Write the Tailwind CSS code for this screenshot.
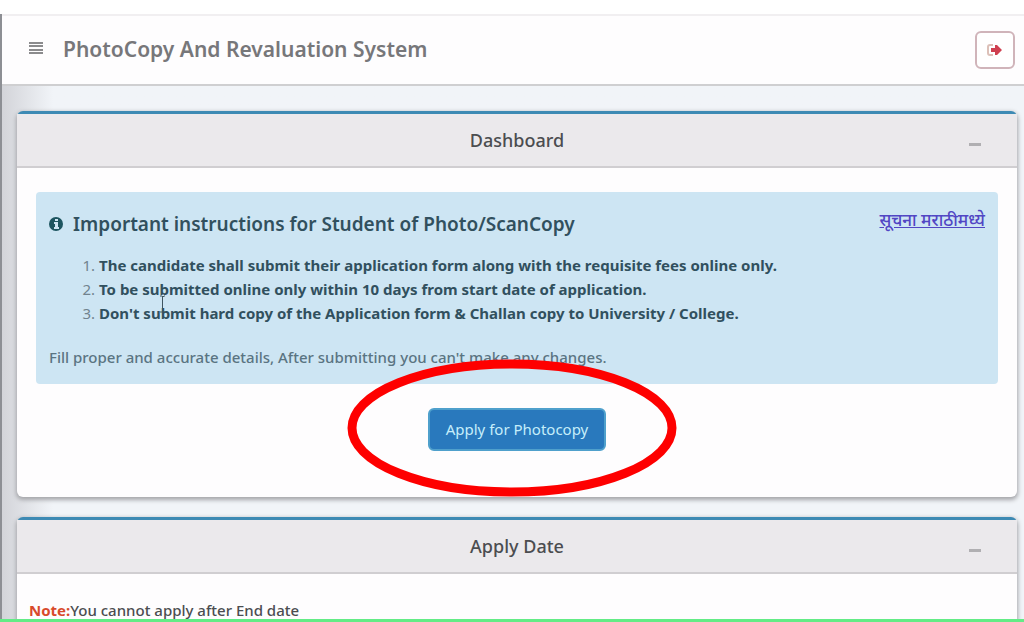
<!DOCTYPE html>
<html lang="en">
<head>
    <meta charset="UTF-8">
    <meta name="viewport" content="width=device-width, initial-scale=1.0">
    <title>PhotoCopy And Revaluation System</title>
    <script src="https://cdn.jsdelivr.net/npm/@tailwindcss/browser@4"></script>
</head>
<body class="h-screen overflow-hidden flex flex-col bg-white font-['Noto_Sans','Open_Sans',sans-serif] text-[#4b4d50]">
    <div class="flex-1 min-h-0 overflow-hidden mt-[14px] border-l-2 border-[#8d8f94] bg-[#f1f4f8]">
        <header class="flex items-center h-[72px] pl-[27px] pr-[9px] bg-[#fefdfe] border-t-2 border-t-[#f1eff1] border-b-2 border-b-[#cfcfd1]">
            <button type="button" aria-label="Toggle menu" class="mr-5">
                <svg class="w-[14px] h-[14px] mb-1" viewBox="0 0 14 14" fill="none" stroke="#8b8b8d" stroke-width="2">
                    <path d="M0 2h14M0 5h14M0 9h14M0 12h14"/>
                </svg>
            </button>
            <h1 class="text-[21px] font-semibold text-[#77777a]">PhotoCopy And Revaluation System</h1>
            <button type="button" aria-label="Log out" class="ml-auto flex items-center justify-center w-10 h-[38px] rounded-md border-2 border-[#d0b4ba] bg-white">
                <svg class="w-4 h-3" viewBox="0 0 16 12">
                    <path d="M6 1H3Q1 1 1 3v6q0 2 2 2h3" fill="none" stroke="#dcc0b8" stroke-width="2"/>
                    <path d="M4 4h4V1h2l5 5-5 5H8V8H4z" fill="#cf4050"/>
                </svg>
            </button>
        </header>

        <main class="flex flex-col gap-5 pt-[25px] pl-[15px] pr-[7px] bg-gradient-to-r from-[#d3d4d9] from-0% to-[#f1f4f8] to-5%">
            <!-- Dashboard -->
            <section class="rounded-md bg-[#fefdfe] border-t-3 border-[#3d8ab4] shadow-[0_2px_4px_1px_#a5a6aa]">
                <div class="flex items-center h-[54px] px-9 bg-[#ebe9ec] border-b-2 border-[#d0ced1]">
                    <h2 class="flex-1 pl-3 text-center text-lg font-medium">Dashboard</h2>
                    <button type="button" aria-label="Collapse" class="w-3 h-[3px] mt-2 bg-[#b0afb2]"></button>
                </div>
                <div class="pt-6 px-[19px] pb-[46px]">
                    <div class="h-48 rounded-sm bg-[#cde5f3] pt-4 px-[13px] text-[#31505e]">
                        <div class="flex items-start justify-between">
                            <h3 class="flex items-center gap-[10px] text-[19px] font-semibold leading-8">
                                <svg class="w-[14px] h-[14px]" viewBox="0 0 14 14">
                                    <circle cx="7" cy="7" r="7" fill="#1d5560"/>
                                    <path d="M6 2h3v2H6zM5 5h4v5h1v2H5v-2h1V7H5z" fill="#cde5f3"/>
                                </svg>
                                Important instructions for Student of Photo/ScanCopy
                            </h3>
                            <a href="#" lang="mr" class="text-[17px] font-medium leading-6 text-[#5146c4] underline">सूचना मराठीमध्ये</a>
                        </div>
                        <div class="relative mt-[13px]">
                            <ol class="list-decimal pl-[50px] text-[15px] leading-6 font-bold marker:font-normal marker:text-[#71838e]">
                                <li>The candidate shall submit their application form along with the requisite fees online only.</li>
                                <li>To be submitted online only within 10 days from start date of application.</li>
                                <li>Don't submit hard copy of the Application form &amp; Challan copy to University / College.</li>
                            </ol>
                            <!-- text cursor -->
                            <svg class="absolute left-[110px] top-[42px] w-[7px] h-[18px]" viewBox="0 0 7 18" fill="none" stroke="#3f5560">
                                <path d="M1 1h2l1 1 1-1h1M3.500 2v14M1 17h2l1-1 1 1h1"/>
                            </svg>
                        </div>
                        <p class="mt-5 text-[15px] font-medium leading-6 text-[#5a7482]">Fill proper and accurate details, After submitting you can't make any changes.</p>
                    </div>
                    <div class="relative flex justify-center mt-6">
                        <button type="button" class="w-[178px] h-[43px] rounded-md border-2 border-[#4fa0cc] bg-[#2979bd] text-[15px] text-[#c5eefa]">Apply for Photocopy</button>
                        <svg class="absolute left-1/2 top-1/2 -translate-x-[170px] -translate-y-[71px] w-[330px] h-[138px] pointer-events-none" viewBox="0 0 330 138">
                            <ellipse cx="165" cy="69" rx="160" ry="64" fill="none" stroke="#fe0000" stroke-width="9"/>
                        </svg>
                    </div>
                </div>
            </section>

            <!-- Apply date -->
            <section class="rounded-md bg-[#fefdfe] border-t-3 border-[#3d8ab4] shadow-[0_2px_4px_1px_#a5a6aa]">
                <div class="flex items-center h-[54px] px-9 bg-[#ebe9ec] border-b-2 border-[#d0ced1]">
                    <h2 class="flex-1 pl-3 text-center text-lg font-medium">Apply Date</h2>
                    <button type="button" aria-label="Collapse" class="w-3 h-[3px] mt-2 bg-[#b0afb2]"></button>
                </div>
                <p class="pt-6 pb-4 px-3 text-[15px] font-medium leading-6"><strong class="text-[#d84a2b]">Note:</strong>You cannot apply after End date</p>
            </section>
        </main>
    </div>
    <div class="h-[3px] shrink-0 bg-[#63ec86]"></div>
</body>
</html>
